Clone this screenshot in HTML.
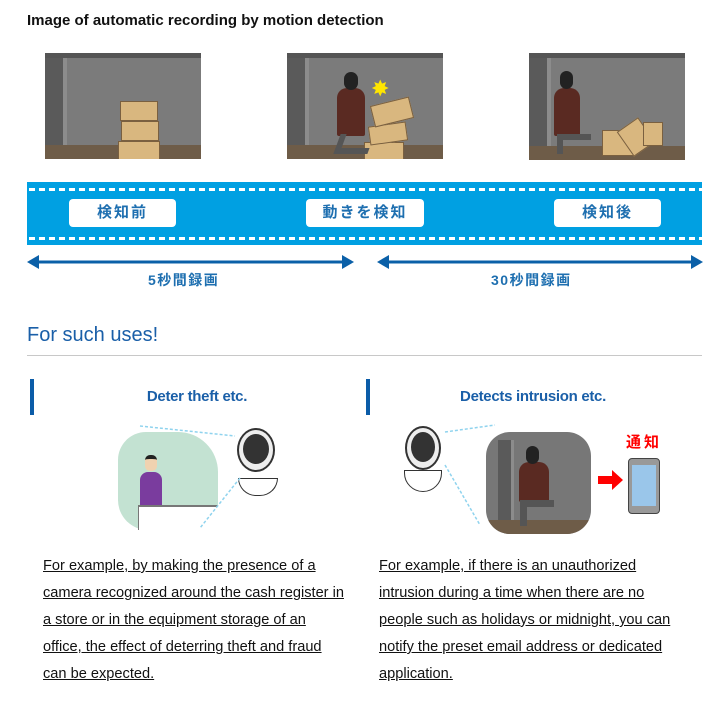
<!DOCTYPE html>
<html><head><meta charset="utf-8"><style>
*{margin:0;padding:0;box-sizing:border-box}
body{width:716px;height:706px;background:#fff;font-family:"Liberation Sans","Noto Sans CJK JP",sans-serif;position:relative;overflow:hidden;color:#111}
.a{position:absolute}
h1{position:absolute;left:27px;top:12px;font-size:15px;font-weight:bold;letter-spacing:0px}
.pan{position:absolute;top:53px;width:156px;height:106px;background:#7b7b7b;border-top:5px solid #555;overflow:hidden}
.pan .fl{position:absolute;left:0;right:0;bottom:0;height:14px;background:#6e5c48}
.pan .dr{position:absolute;left:0;top:0;width:22px;bottom:0;background:#5a5a5a;border-right:4px solid #8c8c8c}
.box{position:absolute;background:#d9b77f;border:1px solid #7a6040}
.band{position:absolute;left:27px;top:182px;width:675px;height:63px;background:#00a0e2}
.dash{position:absolute;left:2px;right:0;height:3px;background:repeating-linear-gradient(90deg,#fff 0 6px,transparent 6px 10px)}
.lab{position:absolute;top:17px;height:28px;background:#fff;border-radius:4px;color:#1e6fb0;font-weight:bold;font-size:15px;text-align:center;line-height:28px;letter-spacing:2px}
.rt{position:absolute;color:#1e6fb0;font-weight:bold;font-size:14px;letter-spacing:1.5px}
h2{position:absolute;left:27px;top:324px;font-size:20px;font-weight:normal;color:#1a5fa8}
.bar{position:absolute;width:4px;height:36px;background:#0b5ca8;top:379px}
.h3{position:absolute;top:388px;font-size:15px;font-weight:bold;color:#1a5fa8;text-align:center;letter-spacing:-0.3px}
p{position:absolute;top:553px;font-size:14.6px;line-height:27px;text-decoration:underline;letter-spacing:0px;white-space:nowrap}
</style></head><body>
<h1>Image of automatic recording by motion detection</h1>

<div class="pan" style="left:45px"><div class="dr"></div><div class="fl"></div>
<div class="box" style="left:73px;top:83px;width:42px;height:20px"></div>
<div class="box" style="left:76px;top:63px;width:38px;height:20px"></div>
<div class="box" style="left:75px;top:43px;width:38px;height:20px"></div></div>

<div class="pan" style="left:287px"><div class="dr"></div><div class="fl"></div>
<div class="box" style="left:77px;top:84px;width:40px;height:18px"></div>
<div class="box" style="left:82px;top:66px;width:38px;height:19px;transform:rotate(-8deg)"></div>
<div class="box" style="left:85px;top:43px;width:40px;height:22px;transform:rotate(-14deg)"></div>
<div class="a" style="left:50px;top:30px;width:28px;height:48px;background:#5a2a22;border-radius:10px 10px 2px 2px"></div>
<div class="a" style="left:57px;top:14px;width:14px;height:18px;background:#222;border-radius:7px"></div>
<div class="a" style="left:50px;top:76px;width:34px;height:20px;border-left:6px solid #555;border-bottom:6px solid #555;transform:skewX(-20deg)"></div>
<div class="a" style="left:84px;top:18px;color:#ffe600;font-size:22px">✸</div></div>

<div class="pan" style="left:529px;height:107px"><div class="dr"></div><div class="fl"></div>
<div class="box" style="left:73px;top:72px;width:34px;height:26px"></div>
<div class="box" style="left:94px;top:64px;width:26px;height:30px;transform:rotate(-35deg)"></div>
<div class="box" style="left:114px;top:64px;width:20px;height:24px"></div>
<div class="a" style="left:25px;top:30px;width:26px;height:48px;background:#5a2a22;border-radius:10px 10px 2px 2px"></div>
<div class="a" style="left:31px;top:13px;width:13px;height:18px;background:#222;border-radius:7px"></div>
<div class="a" style="left:28px;top:76px;width:34px;height:20px;border-left:6px solid #555;border-top:6px solid #555"></div></div>

<div class="band">
<div class="dash" style="top:6px"></div><div class="dash" style="top:55px"></div>
<div class="lab" style="left:42px;width:107px">検知前</div>
<div class="lab" style="left:279px;width:118px">動きを検知</div>
<div class="lab" style="left:527px;width:107px">検知後</div>
</div>

<svg class="a" style="left:27px;top:253px" width="676" height="18">
<g fill="#0b60a8"><rect x="8" y="7.5" width="311" height="3"/><polygon points="0,9 12,2 12,16"/><polygon points="327,9 315,2 315,16"/>
<rect x="358" y="7.5" width="310" height="3"/><polygon points="350,9 362,2 362,16"/><polygon points="676,9 664,2 664,16"/></g></svg>
<div class="rt" style="left:148px;top:270px">5秒間録画</div>
<div class="rt" style="left:491px;top:270px">30秒間録画</div>

<h2>For such uses!</h2>
<div class="a" style="left:27px;top:355px;width:675px;height:1px;background:#c8c8c8"></div>

<div class="bar" style="left:30px"></div>
<div class="h3" style="left:34px;width:326px">Deter theft etc.</div>
<div class="bar" style="left:366px"></div>
<div class="h3" style="left:370px;width:326px">Detects intrusion etc.</div>

<div class="a" style="left:118px;top:432px;width:100px;height:98px;background:#c3e2d2;border-radius:28px 40px 8px 30px"></div>
<div class="a" style="left:140px;top:472px;width:22px;height:34px;background:#7a3c9e;border-radius:8px 8px 0 0"></div>
<div class="a" style="left:145px;top:455px;width:12px;height:16px;background:#f0d2b0;border-top:4px solid #222;border-radius:5px"></div>
<div class="a" style="left:138px;top:505px;width:80px;height:25px;background:#fff;border-top:2px solid #777;border-left:1px solid #777"></div>
<div class="a" style="left:237px;top:428px;width:38px;height:44px;border:2px solid #333;border-radius:50%;background:#eee"></div>
<div class="a" style="left:243px;top:434px;width:26px;height:30px;background:#333;border-radius:50%"></div>
<div class="a" style="left:238px;top:478px;width:40px;height:18px;border:1.5px solid #333;border-radius:0 0 20px 20px"></div>
<svg class="a" style="left:130px;top:420px" width="240" height="120"><g stroke="#8fd3ee" stroke-dasharray="3,2" stroke-width="1.5"><line x1="10" y1="6" x2="105" y2="16"/><line x1="110" y1="58" x2="70" y2="108"/></g></svg>

<div class="a" style="left:405px;top:426px;width:36px;height:44px;border:2px solid #333;border-radius:50%;background:#eee"></div>
<div class="a" style="left:411px;top:432px;width:24px;height:30px;background:#333;border-radius:50%"></div>
<div class="a" style="left:404px;top:470px;width:38px;height:22px;border:1.5px solid #333;border-radius:0 0 20px 20px"></div>
<svg class="a" style="left:440px;top:420px" width="60" height="110"><g stroke="#8fd3ee" stroke-dasharray="3,2" stroke-width="1.5"><line x1="5" y1="12" x2="55" y2="5"/><line x1="5" y1="45" x2="40" y2="105"/></g></svg>
<div class="a" style="left:486px;top:432px;width:105px;height:102px;background:#777;border-radius:24px;overflow:hidden">
<div class="a" style="left:12px;top:8px;width:16px;height:94px;background:#5a5a5a;border-right:3px solid #8c8c8c"></div>
<div class="a" style="left:0;right:0;bottom:0;height:14px;background:#6e5c48"></div>
<div class="a" style="left:33px;top:30px;width:30px;height:40px;background:#5a2a22;border-radius:10px 10px 2px 2px"></div>
<div class="a" style="left:40px;top:14px;width:13px;height:18px;background:#222;border-radius:7px"></div>
<div class="a" style="left:34px;top:68px;width:34px;height:26px;border-left:7px solid #555;border-top:7px solid #555"></div></div>
<div class="a" style="left:626px;top:431px;color:#f00;font-weight:bold;font-size:15px;letter-spacing:3px">通知</div>
<svg class="a" style="left:598px;top:470px" width="26" height="20"><polygon points="0,6 14,6 14,0 25,10 14,20 14,14 0,14" fill="#f00"/></svg>
<div class="a" style="left:628px;top:458px;width:32px;height:56px;background:#999;border:1px solid #444;border-radius:4px"></div>
<div class="a" style="left:632px;top:465px;width:24px;height:41px;background:#9ac6ea"></div>

<p style="left:43px">For example, by making the presence of a<br>camera recognized around the cash register in<br>a store or in the equipment storage of an<br>office, the effect of deterring theft and fraud<br>can be expected.</p>
<p style="left:379px">For example, if there is an unauthorized<br>intrusion during a time when there are no<br>people such as holidays or midnight, you can<br>notify the preset email address or dedicated<br>application.</p>
</body></html>
